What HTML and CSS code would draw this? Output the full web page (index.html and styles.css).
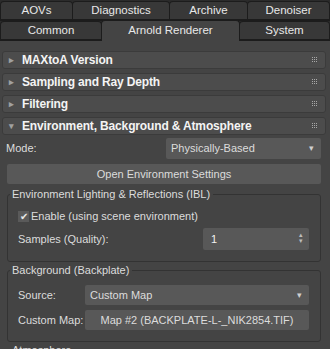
FILE: index.html
```html
<!DOCTYPE html>
<html lang="en">
<head>
  <meta charset="UTF-8">
  <title>Render Setup</title>
  <link rel="stylesheet" href="styles.css">
</head>
<body>

  <div class="tabs">
    <div class="tab-row">
      <div class="tab" style="width:73px">AOVs</div>
      <div class="tab" style="width:98px">Diagnostics</div>
      <div class="tab" style="width:79px">Archive</div>
      <div class="tab tab-last">Denoiser</div>
    </div>
    <div class="tab-row">
      <div class="tab" style="width:102px">Common</div>
      <div class="tab tab-active" style="width:139px">Arnold Renderer</div>
      <div class="tab tab-last">System</div>
    </div>
  </div>

  <div class="rollouts">
    <div class="rollout">
      <div class="rollout-head"><span class="arrow">&#9656;</span>MAXtoA Version
        <svg class="grip" width="5" height="5"><path d="M0 0h1v1H0zM2 0h1v1H2zM4 0h1v1H4zM0 2h1v1H0zM2 2h1v1H2zM4 2h1v1H4zM0 4h1v1H0zM2 4h1v1H2zM4 4h1v1H4z"/></svg>
      </div>
    </div>
    <div class="rollout">
      <div class="rollout-head"><span class="arrow">&#9656;</span>Sampling and Ray Depth
        <svg class="grip" width="5" height="5"><path d="M0 0h1v1H0zM2 0h1v1H2zM4 0h1v1H4zM0 2h1v1H0zM2 2h1v1H2zM4 2h1v1H4zM0 4h1v1H0zM2 4h1v1H2zM4 4h1v1H4z"/></svg>
      </div>
    </div>
    <div class="rollout">
      <div class="rollout-head"><span class="arrow">&#9656;</span>Filtering
        <svg class="grip" width="5" height="5"><path d="M0 0h1v1H0zM2 0h1v1H2zM4 0h1v1H4zM0 2h1v1H0zM2 2h1v1H2zM4 2h1v1H4zM0 4h1v1H0zM2 4h1v1H2zM4 4h1v1H4z"/></svg>
      </div>
    </div>

    <div class="rollout open">
      <div class="rollout-head"><span class="arrow">&#9662;</span>Environment, Background &amp; Atmosphere
        <svg class="grip" width="5" height="5"><path d="M0 0h1v1H0zM2 0h1v1H2zM4 0h1v1H4zM0 2h1v1H0zM2 2h1v1H2zM4 2h1v1H4zM0 4h1v1H0zM2 4h1v1H2zM4 4h1v1H4z"/></svg>
      </div>
      <div class="rollout-body">
        <div class="row mode-row">
          <span class="label">Mode:</span>
          <div class="dropdown mode-drop">Physically-Based<span class="caret">&#9662;</span></div>
        </div>
        <div class="btn wide-btn">Open Environment Settings</div>

        <fieldset class="group">
          <legend>Environment Lighting &amp; Reflections (IBL)</legend>
          <label class="check"><span class="box">&#10004;</span>Enable (using scene environment)</label>
          <div class="row">
            <span class="label">Samples (Quality):</span>
            <div class="spinner">1<span class="spin">&#9652;<br>&#9662;</span></div>
          </div>
        </fieldset>

        <fieldset class="group group-bg">
          <legend>Background (Backplate)</legend>
          <div class="row">
            <span class="label lbl-short">Source:</span>
            <div class="dropdown field">Custom Map<span class="caret">&#9662;</span></div>
          </div>
          <div class="row">
            <span class="label lbl-short">Custom Map:</span>
            <div class="btn field">Map #2 (BACKPLATE-L-_NIK2854.TIF)</div>
          </div>
        </fieldset>

        <fieldset class="group">
          <legend>Atmosphere</legend>
        </fieldset>
      </div>
    </div>
  </div>

</body>
</html>
```

FILE: styles.css
```css
body {
  margin: 0;
  background-color: #444444;
  font-family: "Liberation Sans", Arial, sans-serif;
  font-size: 11px;
  line-height: 13px;
  color: #dcdcdc;
  overflow: hidden;
}

/* tabs */
.tabs {
  background-color: #2b2b2b;
  padding-top: 1px;
}
.tab-row {
  display: flex;
  height: 20px;
}
.tab {
  box-sizing: border-box;
  background-color: #383838;
  border: 1px solid #1c1c1c;
  border-bottom-width: 2px;
  border-radius: 4px 4px 0 0;
  margin-right: -1px;
  text-align: center;
  line-height: 17px;
  font-size: 11.5px;
  color: #e8e8e8;
}
.tab-last {
  flex: 1;
  margin-right: 0;
}
.tab-active {
  background-color: #444444;
  border-bottom: none;
  margin-top: -1px;
  height: 21px;
  line-height: 19px;
}

/* rollouts */
.rollouts {
  padding: 10px 4px 0 2px;
}
.rollout {
  margin-bottom: 4px;
}
.rollout-head {
  position: relative;
  height: 18px;
  box-sizing: border-box;
  background-color: #4c4c4c;
  border: 1px solid #3b3b3b;
  border-radius: 3px;
  padding-left: 19px;
  font-weight: bold;
  font-size: 12px;
  letter-spacing: -0.15px;
  line-height: 16px;
  color: #f4f4f4;
}
.arrow {
  position: absolute;
  left: 6px;
  top: 0;
  font-size: 9px;
  color: #a0a0a0;
}
.grip {
  position: absolute;
  right: 8px;
  top: 5px;
  fill: #a8a8a8;
}
.rollout-body {
  padding: 3px 5px 0 5px;
}

.row {
  display: flex;
  align-items: center;
  margin-bottom: 5px;
}
.label {
  flex: 1;
}
.mode-row {
  margin-left: -1px;
}
.dropdown,
.btn,
.spinner {
  position: relative;
  box-sizing: border-box;
  background-color: #585858;
  border-radius: 2px;
  height: 20px;
  line-height: 20px;
  color: #dcdcdc;
}
.dropdown {
  padding-left: 5px;
}
.mode-drop {
  width: 155px;
  height: 21px;
  line-height: 21px;
}
.caret {
  position: absolute;
  right: 7px;
  top: 0;
  font-size: 9px;
  color: #cfcfcf;
}
.btn {
  text-align: center;
}
.wide-btn {
  margin-bottom: 4px;
}

.group {
  margin: 0 0 2px 0;
  border: 1px solid #333333;
  border-radius: 3px;
  padding: 3px 11px 11px 10px;
}
.group-bg {
  padding-top: 8px;
}
legend {
  padding: 0 3px 0 2px;
  margin-left: -8px;
}
.check {
  display: flex;
  align-items: center;
  margin: 6px 0 5px 0;
}
.box {
  width: 11px;
  height: 11px;
  margin-right: 2px;
  background-color: #5a5a5a;
  font-size: 10px;
  line-height: 11px;
  text-align: center;
  color: #e8e8e8;
}
.group .row:last-child {
  margin-bottom: 0;
}
.spinner {
  width: 106px;
  height: 22px;
  line-height: 22px;
  padding-left: 8px;
  color: #f2f2f2;
}
.spin {
  position: absolute;
  right: 6px;
  top: 4px;
  font-size: 7px;
  line-height: 6px;
  color: #bcbcbc;
}
.lbl-short {
  flex: 0 0 67px;
}
.field {
  flex: 1;
}
```
